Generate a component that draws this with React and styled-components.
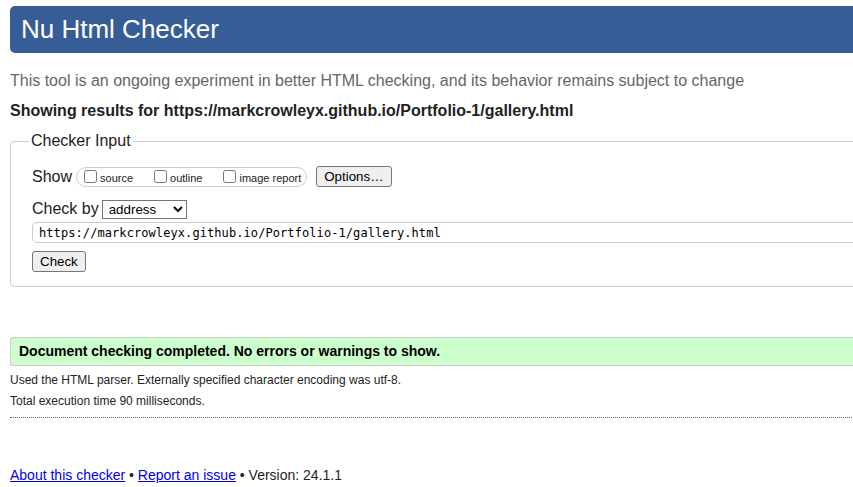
import React from "react";
import styled, { createGlobalStyle } from "styled-components";

const GlobalStyle = createGlobalStyle`
  html, body {
    margin: 0;
    padding: 0;
    overflow: hidden;
    background: #fff;
  }
  body {
    font-family: "Liberation Sans", Arial, sans-serif;
    color: #222;
  }
`;

const Page = styled.div`
  width: 1100px;
  padding: 6px 0 0 10px;
  box-sizing: border-box;
`;

const Header = styled.h1`
  margin: 0;
  padding: 8px 12px 9px 11px;
  background: #365d95;
  color: #fff;
  font-size: 26px;
  font-weight: normal;
  line-height: 30px;
  border-radius: 5px;
`;

const Intro = styled.p`
  margin: 19px 0 0;
  font-size: 16px;
  line-height: 18px;
  color: #666;
`;

const Results = styled.p`
  margin: 12px 0 0;
  font-size: 16px;
  line-height: 18px;
  font-weight: bold;
  color: #222;
`;

const Fieldset = styled.fieldset`
  margin: 12px 0 0;
  padding: 16px 16px 14px 18px;
  border: 1px solid #ccc;
  border-radius: 4px;
  min-width: 0;
`;

const Legend = styled.legend`
  padding: 0 2px;
  font-size: 16px;
  line-height: 18px;
  color: #222;
`;

const Row = styled.div`
  display: flex;
  align-items: center;
  height: ${({ h }) => h || 21}px;
  margin-top: ${({ top }) => top || 0}px;
  padding-left: 3px;
  font-size: 16px;
`;

const RowLabel = styled.span`
  margin-right: ${({ gap }) => gap}px;
  color: #222;
`;

const Pill = styled.span`
  display: inline-flex;
  align-items: center;
  height: 18px;
  padding: 0 5px 0 3px;
  border: 1px solid #ccc;
  border-radius: 10px;
  margin-right: 9px;
`;

const CheckLabel = styled.label`
  display: inline-flex;
  align-items: center;
  font-size: 11px;
  color: #222;
  margin-right: ${({ last }) => (last ? 0 : 17)}px;

  input {
    width: 13px;
    height: 13px;
    margin: 0 3px 0 4px;
  }

  span {
    position: relative;
    top: 1px;
  }
`;

const Button = styled.button`
  font-family: "Liberation Sans", Arial, sans-serif;
  font-size: 13.33px;
  line-height: 15px;
  height: 21px;
  padding: 2px 7px;
  background: #efefef;
  color: #000;
  border: 1px solid #767676;
  border-radius: 3px;
`;

const Select = styled.select`
  font-family: "Liberation Sans", Arial, sans-serif;
  font-size: 13.33px;
  width: 85px;
  height: 19px;
  padding: 0 0 0 2px;
  border: 1px solid #767676;
  border-radius: 0;
  background: #fff;
  color: #000;
`;

const UrlInput = styled.input`
  box-sizing: border-box;
  width: 100%;
  height: 21px;
  padding: 0 6px;
  border: 1px solid #ccc;
  border-radius: 5px;
  font-family: "DejaVu Sans Mono", "Liberation Mono", monospace;
  font-size: 12px;
  letter-spacing: 0.08px;
  color: #000;
`;

const Success = styled.div`
  margin-top: 50px;
  padding: 0 8px 0 8px;
  height: 27px;
  line-height: 27px;
  background: #ccffcc;
  border: 1px solid #ccc;
  border-right: none;
  border-radius: 3px 0 0 3px;
  font-size: 14px;
  font-weight: bold;
  color: #000;
`;

const Detail = styled.p`
  margin: ${({ first }) => (first ? "4px" : "0")} 0 0;
  font-size: 12px;
  line-height: 21px;
  color: #222;
`;

const Divider = styled.div`
  margin-top: 5px;
  border-top: 1px dotted #666;
`;

const Footer = styled.p`
  margin: 49px 0 0;
  font-size: 14px;
  line-height: 16px;
  color: #222;

  a {
    color: #0000ee;
    text-decoration: underline;
  }
`;

export default function App() {
  const url = "https://markcrowleyx.github.io/Portfolio-1/gallery.html";
  return (
    <>
      <GlobalStyle />
      <Page>
        <Header>Nu Html Checker</Header>
        <Intro>
          This tool is an ongoing experiment in better HTML checking, and its
          behavior remains subject to change
        </Intro>
        <Results>Showing results for {url}</Results>
        <Fieldset>
          <Legend>Checker Input</Legend>
          <Row>
            <RowLabel gap={4}>Show</RowLabel>
            <Pill>
              <CheckLabel>
                <input type="checkbox" />
                <span>source</span>
              </CheckLabel>
              <CheckLabel>
                <input type="checkbox" />
                <span>outline</span>
              </CheckLabel>
              <CheckLabel last>
                <input type="checkbox" />
                <span>image report</span>
              </CheckLabel>
            </Pill>
            <Button>Options…</Button>
          </Row>
          <Row top={12} h={20}>
            <RowLabel gap={3}>Check by</RowLabel>
            <Select defaultValue="address">
              <option value="address">address</option>
              <option value="file">file upload</option>
              <option value="text">text input</option>
            </Select>
          </Row>
          <Row top={3}>
            <UrlInput defaultValue={url} />
          </Row>
          <Row top={8}>
            <Button>Check</Button>
          </Row>
        </Fieldset>
        <Success>
          Document checking completed. No errors or warnings to show.
        </Success>
        <Detail first>
          Used the HTML parser. Externally specified character encoding was
          utf-8.
        </Detail>
        <Detail>Total execution time 90 milliseconds.</Detail>
        <Divider />
        <Footer>
          <a href="#about">About this checker</a> •{" "}
          <a href="#issue">Report an issue</a> • Version: 24.1.1
        </Footer>
      </Page>
    </>
  );
}
